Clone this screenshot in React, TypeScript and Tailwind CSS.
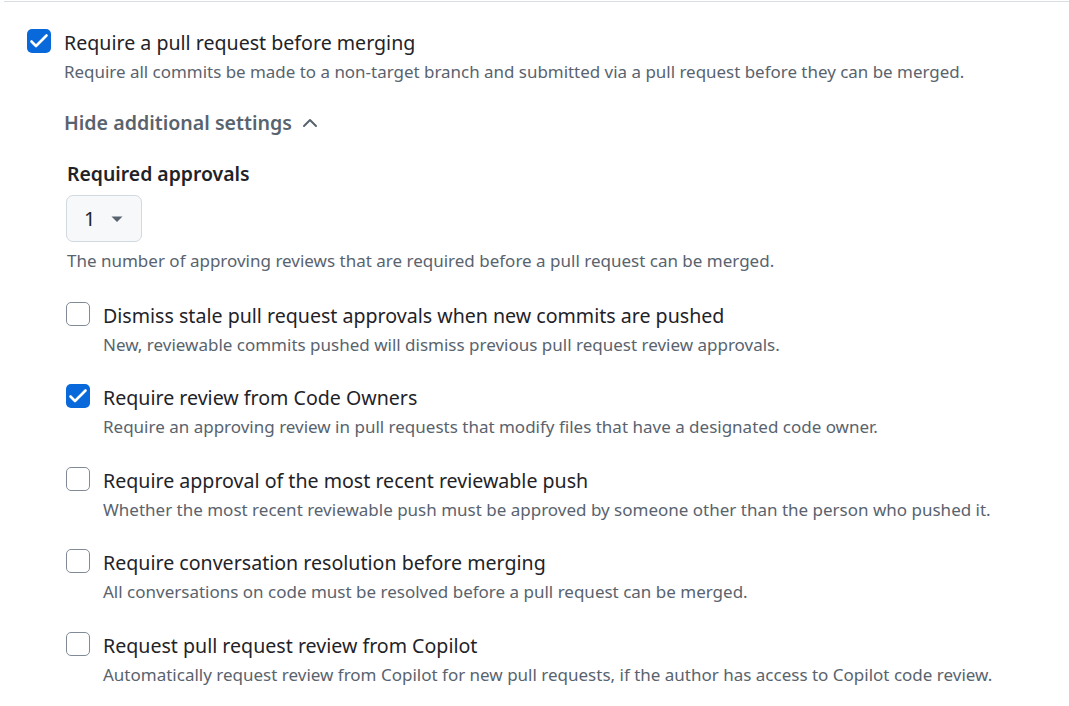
import React from "react";

const font = { fontFamily: '"Noto Sans", "Open Sans", sans-serif' };

function Box({ checked }: { checked: boolean }) {
  if (checked) {
    return (
      <div className="w-[24px] h-[24px] shrink-0 rounded-[5px] bg-[#0969da] flex items-center justify-center">
        <svg width="24" height="24" viewBox="0 0 24 24" fill="none">
          <polyline points="4.5,12.5 9,17 19.5,6.5" stroke="#ffffff" strokeWidth="2.6" strokeLinecap="round" strokeLinejoin="round" />
        </svg>
      </div>
    );
  }
  return <div className="w-[24px] h-[24px] shrink-0 rounded-[5px] border border-[#818b98] bg-white" />;
}

function Row({ checked, title, desc }: { checked: boolean; title: string; desc: string }) {
  return (
    <div className="flex gap-[13px]">
      <div className="pt-[1px]">
        <Box checked={checked} />
      </div>
      <div className="flex flex-col">
        <div className="text-[19.6px] leading-[30px] text-[#1f2328] whitespace-nowrap">{title}</div>
        <div className="mt-[1px] text-[17px] leading-[26px] text-[#59636e] whitespace-nowrap">{desc}</div>
      </div>
    </div>
  );
}

export default function App() {
  return (
    <div className="w-[1069px] h-[706px] bg-white overflow-hidden" style={font}>
      <div className="ml-[4px] mt-px border-t border-[#d8dee4]" />
      <div className="pl-[27px] pt-[26px]">
        <div className="flex gap-[13px]">
          <div className="pt-[1px]">
            <Box checked={true} />
          </div>
          <div className="flex flex-col">
            <div className="text-[19.6px] leading-[30px] text-[#1f2328] whitespace-nowrap">Require a pull request before merging</div>
            <div className="mt-[1px] text-[16.95px] leading-[26px] text-[#59636e] whitespace-nowrap">
              Require all commits be made to a non-target branch and submitted via a pull request before they can be merged.
            </div>
            <div className="mt-[23px] flex items-center gap-[10px] text-[19.6px] leading-[30px] font-semibold text-[#59636e]">
              <span>Hide additional settings</span>
              <svg width="16" height="16" viewBox="0 0 16 16" fill="none">
                <polyline points="2,11 8,5 14,11" stroke="#59636e" strokeWidth="2" strokeLinecap="round" strokeLinejoin="round" />
              </svg>
            </div>
            <div className="ml-[3px] mt-[21px] text-[19.4px] leading-[30px] font-semibold text-[#1f2328]">Required approvals</div>
            <div className="ml-[2px] mt-[6px] w-[76px] h-[47px] rounded-[7px] border border-[#d1d9e0] bg-[#f6f8fa] flex items-center pl-[17px] gap-[16px]">
              <span className="text-[20px] leading-[30px] text-[#1f2328]">1</span>
              <svg width="12" height="8" viewBox="0 0 12 8">
                <polygon points="0.5,1.5 11.5,1.5 6,7" fill="#59636e" />
              </svg>
            </div>
            <div className="ml-[3px] mt-[6px] text-[17px] leading-[26px] text-[#59636e] whitespace-nowrap">
              The number of approving reviews that are required before a pull request can be merged.
            </div>
            <div className="ml-[2px] mt-[27px] flex flex-col gap-[25.4px]">
              <Row checked={false} title="Dismiss stale pull request approvals when new commits are pushed" desc="New, reviewable commits pushed will dismiss previous pull request review approvals." />
              <Row checked={true} title="Require review from Code Owners" desc="Require an approving review in pull requests that modify files that have a designated code owner." />
              <Row checked={false} title="Require approval of the most recent reviewable push" desc="Whether the most recent reviewable push must be approved by someone other than the person who pushed it." />
              <Row checked={false} title="Require conversation resolution before merging" desc="All conversations on code must be resolved before a pull request can be merged." />
              <Row checked={false} title="Request pull request review from Copilot" desc="Automatically request review from Copilot for new pull requests, if the author has access to Copilot code review." />
            </div>
          </div>
        </div>
      </div>
    </div>
  );
}
